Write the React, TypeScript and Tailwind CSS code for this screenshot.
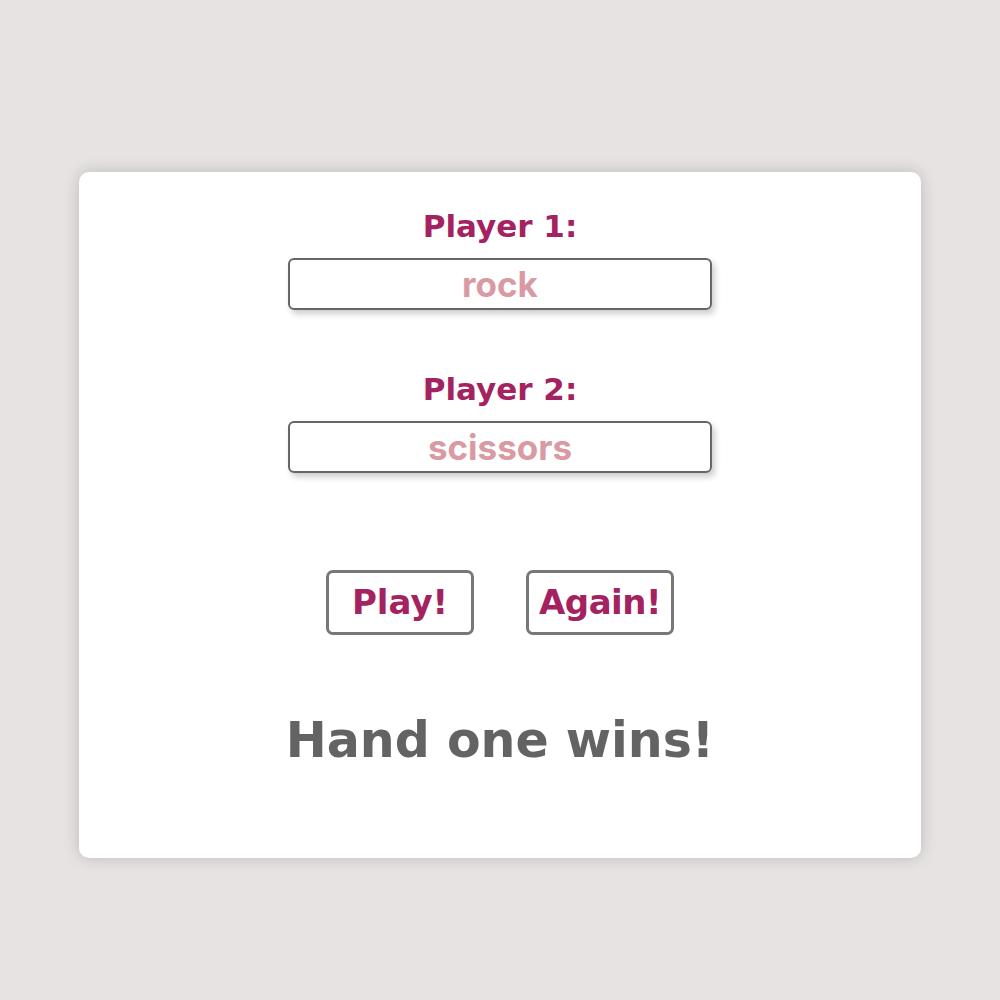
import { useState } from "react";

export default function App() {
  const [p1, setP1] = useState("");
  const [p2, setP2] = useState("");

  return (
    <main className="min-h-screen w-full bg-[#e7e3e2] flex flex-col items-center pt-[172px]">
      <div className="w-[842px] h-[686px] bg-white rounded-[10px] shadow-[0_0_16px_rgba(0,0,0,0.18)] flex flex-col items-center pt-[34px]">
        <label className="h-[40px] leading-[40px] text-[31px] font-bold text-[#a4225f] font-['DejaVu_Sans',sans-serif]">
          Player 1:
        </label>
        <input
          value={p1}
          onChange={(e) => setP1(e.target.value)}
          placeholder="rock"
          className="mt-[12px] w-[424px] h-[52px] border-2 border-[#666666] rounded-[6px] shadow-[3px_4px_6px_rgba(0,0,0,0.2)] text-center text-[35px] font-bold text-[#d99aa3] placeholder:text-[#d99aa3] outline-none font-['Inter','Liberation_Sans',sans-serif]"
        />
        <label className="mt-[59px] h-[40px] leading-[40px] text-[31px] font-bold text-[#a4225f] font-['DejaVu_Sans',sans-serif]">
          Player 2:
        </label>
        <input
          value={p2}
          onChange={(e) => setP2(e.target.value)}
          placeholder="scissors"
          className="mt-[12px] w-[424px] h-[52px] border-2 border-[#666666] rounded-[6px] shadow-[3px_4px_6px_rgba(0,0,0,0.2)] text-center text-[35px] font-bold text-[#d99aa3] placeholder:text-[#d99aa3] outline-none font-['Inter','Liberation_Sans',sans-serif]"
        />
        <div className="mt-[97px] flex gap-[52px]">
          <button className="w-[148px] h-[65px] border-[3px] border-[#777777] rounded-[7px] bg-white text-[34px] font-bold text-[#a4225f] font-['DejaVu_Sans',sans-serif]">
            Play!
          </button>
          <button className="w-[148px] h-[65px] border-[3px] border-[#777777] rounded-[7px] bg-white text-[34px] font-bold text-[#a4225f] tracking-[-0.5px] font-['DejaVu_Sans',sans-serif]">
            Again!
          </button>
        </div>
        <h1 className="mt-[82px] h-[48px] leading-[48px] text-[49px] font-bold text-[#636363] font-['DejaVu_Sans',sans-serif]">
          Hand one wins!
        </h1>
      </div>
    </main>
  );
}
